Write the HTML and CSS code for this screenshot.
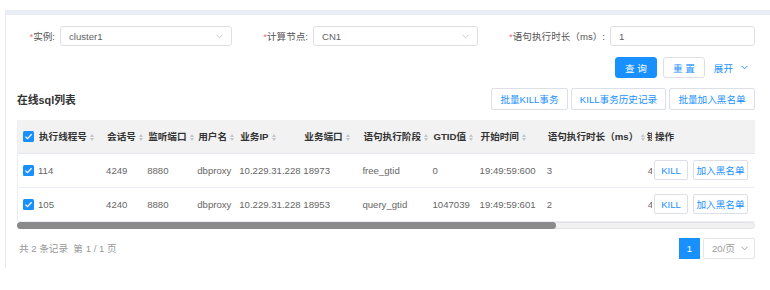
FILE: index.html
```html
<!DOCTYPE html>
<html lang="zh-CN">

<head>
    <meta charset="UTF-8">
    <title>在线sql列表</title>
    <link rel="stylesheet" href="styles.css">
</head>

<body>
    <div class="page">
        <div class="panel">
            <div class="filters">
                <label class="f-label"><i>*</i>实例:</label>
                <div class="select">
                    <span>cluster1</span>
                    <svg class="arrow" width="7" height="5" viewBox="0 0 7 5"><path d="M0.5 0.8L3.5 3.8L6.5 0.8" /></svg>
                </div>
                <label class="f-label"><i>*</i>计算节点:</label>
                <div class="select">
                    <span>CN1</span>
                    <svg class="arrow" width="7" height="5" viewBox="0 0 7 5"><path d="M0.5 0.8L3.5 3.8L6.5 0.8" /></svg>
                </div>
                <label class="f-label"><i>*</i>语句执行时长（ms）:</label>
                <div class="select"><span>1</span></div>
            </div>

            <div class="actions">
                <button class="btn btn-primary">查 询</button>
                <button class="btn">重 置</button>
                <a class="expand" href="javascript:void(0)">展开
                    <svg width="7" height="5" viewBox="0 0 7 5"><path d="M0.5 0.8L3.5 3.8L6.5 0.8" /></svg>
                </a>
            </div>

            <div class="toolbar">
                <h3>在线sql列表</h3>
                <div class="tool-btns">
                    <button class="tbtn w77">批量KILL事务</button>
                    <button class="tbtn w95">KILL事务历史记录</button>
                    <button class="tbtn w86">批量加入黑名单</button>
                </div>
            </div>

            <div class="grid">
                <div class="grid-body">
                    <div class="scroll-part">
                        <table class="tbl">
                            <colgroup>
                                <col style="width:83px"><col style="width:41px"><col style="width:50px">
                                <col style="width:42px"><col style="width:64px"><col style="width:59px">
                                <col style="width:70px"><col style="width:47px"><col style="width:67px">
                                <col style="width:100px"><col style="width:120px">
                            </colgroup>
                            <thead>
                                <tr>
                                    <th><svg class="cb" width="11" height="11" viewBox="0 0 11 11"><rect width="11" height="11" rx="1.5" /><path d="M2.4 5.6L4.5 7.6L8.6 3.3" /></svg>执行线程号<span class="sort"></span></th>
                                    <th>会话号<span class="sort"></span></th>
                                    <th>监听端口<span class="sort"></span></th>
                                    <th>用户名<span class="sort"></span></th>
                                    <th>业务IP<span class="sort"></span></th>
                                    <th>业务端口<span class="sort"></span></th>
                                    <th>语句执行阶段<span class="sort"></span></th>
                                    <th>GTID值<span class="sort"></span></th>
                                    <th>开始时间<span class="sort"></span></th>
                                    <th>语句执行时长（ms）<span class="sort"></span></th>
                                    <th class="cut">锁</th>
                                </tr>
                            </thead>
                            <tbody>
                                <tr>
                                    <td><svg class="cb" width="11" height="11" viewBox="0 0 11 11"><rect width="11" height="11" rx="1.5" /><path d="M2.4 5.6L4.5 7.6L8.6 3.3" /></svg>114</td>
                                    <td>4249</td>
                                    <td>8880</td>
                                    <td>dbproxy</td>
                                    <td>10.229.31.228</td>
                                    <td>18973</td>
                                    <td>free_gtid</td>
                                    <td>0</td>
                                    <td>19:49:59:600</td>
                                    <td>3</td>
                                    <td class="cut">4</td>
                                </tr>
                                <tr>
                                    <td><svg class="cb" width="11" height="11" viewBox="0 0 11 11"><rect width="11" height="11" rx="1.5" /><path d="M2.4 5.6L4.5 7.6L8.6 3.3" /></svg>105</td>
                                    <td>4240</td>
                                    <td>8880</td>
                                    <td>dbproxy</td>
                                    <td>10.229.31.228</td>
                                    <td>18953</td>
                                    <td>query_gtid</td>
                                    <td>1047039</td>
                                    <td>19:49:59:601</td>
                                    <td>2</td>
                                    <td class="cut">4</td>
                                </tr>
                            </tbody>
                        </table>
                    </div>
                    <div class="fixed-part">
                        <table class="tbl">
                            <thead>
                                <tr><th class="op-head">操作</th></tr>
                            </thead>
                            <tbody>
                                <tr><td class="op"><button class="mini kill">KILL</button><button class="mini black">加入黑名单</button></td></tr>
                                <tr><td class="op"><button class="mini kill">KILL</button><button class="mini black">加入黑名单</button></td></tr>
                            </tbody>
                        </table>
                    </div>
                </div>
                <div class="hscroll">
                    <div class="thumb"></div>
                </div>
            </div>

            <div class="footer">
                <span class="total">共 2 条记录 &nbsp;第 1 / 1 页</span>
                <div class="pager">
                    <span class="pg-num">1</span>
                    <div class="pg-size">
                        <span>20/页</span>
                        <svg width="7" height="5" viewBox="0 0 7 5"><path d="M0.5 0.8L3.5 3.8L6.5 0.8" /></svg>
                    </div>
                </div>
            </div>
        </div>
    </div>
</body>

</html>
```

FILE: styles.css
```css
body {
    margin: 0;
    font-family: "Liberation Sans", "Noto Sans CJK SC", sans-serif;
    font-size: 9.6px;
    color: #333;
    background: #fff;
}

.page {
    padding: 10px 0 0 5px;
}

.panel {
    border-top: 5px solid #e9edf4;
    border-left: 1px solid #e8e8e8;
    height: 258px;
    padding: 0 15px 0 11px;
    box-sizing: border-box;
}

/* filter form */
.filters {
    display: grid;
    grid-template-columns: 43px 172px 81px 165px 132px 145px;
    align-items: center;
    margin-top: 11px;
}

.f-label {
    text-align: right;
    padding-right: 5px;
    color: #555;
    white-space: nowrap;
}

.f-label i {
    font-style: normal;
    color: #f56c6c;
}

.select {
    height: 20px;
    border: 1px solid #dcdfe6;
    border-radius: 3px;
    box-sizing: border-box;
    display: flex;
    align-items: center;
    padding: 0 8px;
    color: #606266;
}

.select .arrow {
    margin-left: auto;
    fill: none;
    stroke: #c0c4cc;
    stroke-width: 0.9;
}

.actions {
    display: flex;
    justify-content: flex-end;
    align-items: center;
    margin-top: 11px;
}

.btn {
    width: 42px;
    height: 21px;
    margin-left: 6px;
    border: 1px solid #dcdfe6;
    border-radius: 3px;
    background: #fff;
    color: #1890ff;
    font: inherit;
    padding: 0;
    cursor: pointer;
}

.btn-primary {
    background: #1890ff;
    border-color: #1890ff;
    color: #fff;
}

.expand {
    display: flex;
    align-items: center;
    gap: 8px;
    margin-left: 9px;
    padding-right: 7px;
    color: #1890ff;
    text-decoration: none;
}

.expand svg {
    fill: none;
    stroke: #1890ff;
    stroke-width: 0.9;
}

/* list toolbar */
.toolbar {
    display: flex;
    align-items: center;
    justify-content: space-between;
    margin-top: 10px;
}

.toolbar h3 {
    margin: 0;
    font-size: 10.8px;
    font-weight: bold;
    color: #333;
}

.tool-btns {
    display: flex;
    gap: 3px;
}

.tbtn {
    height: 22px;
    padding: 0;
    border: 1px solid #dcdfe6;
    border-radius: 2px;
    background: #fff;
    color: #1890ff;
    font: inherit;
    white-space: nowrap;
    cursor: pointer;
}

.w77 {
    width: 77px;
}

.w95 {
    width: 95px;
}

.w86 {
    width: 86px;
}

/* table */
.grid {
    margin-top: 10px;
}

.grid-body {
    display: flex;
    border-left: 1px solid #ebeef5;
}

.scroll-part {
    width: 634px;
    overflow: hidden;
}

.fixed-part {
    width: 103px;
}

.tbl {
    border-collapse: collapse;
    table-layout: fixed;
    width: 744px;
    white-space: nowrap;
}

.fixed-part .tbl {
    width: 103px;
}

.tbl th {
    height: 33px;
    box-sizing: border-box;
    background: #f2f2f2;
    border-bottom: 1px solid #e4e7ed;
    text-align: left;
    font-weight: bold;
    color: #333;
    padding: 0 0 0 6px;
}

.tbl td {
    height: 34px;
    box-sizing: border-box;
    border-bottom: 1px solid #ebeef5;
    color: #666;
    padding: 0 0 0 5px;
}

.tbl th:first-child {
    padding-left: 5px;
}

.tbl th.cut {
    padding-left: 5px;
}

.tbl td.cut {
    padding-left: 6px;
}

.cb {
    vertical-align: -2px;
    margin-right: 5px;
}

td .cb {
    margin-right: 4px;
}

.cb rect {
    fill: #1890ff;
}

.cb path {
    fill: none;
    stroke: #fff;
    stroke-width: 1.3;
}

.sort {
    display: inline-flex;
    flex-direction: column;
    gap: 1px;
    vertical-align: middle;
    margin-left: 3px;
}

.sort::before,
.sort::after {
    content: "";
    border-left: 2px solid transparent;
    border-right: 2px solid transparent;
}

.sort::before {
    border-bottom: 3px solid #c0c4cc;
}

.sort::after {
    border-top: 3px solid #c0c4cc;
}

.tbl th.op-head {
    padding-left: 3px;
}

.tbl td.op {
    padding-left: 2px;
}

.mini {
    height: 20px;
    padding: 0;
    border: 1px solid #dcdfe6;
    border-radius: 2px;
    background: #fff;
    color: #1890ff;
    font: inherit;
    vertical-align: middle;
    cursor: pointer;
}

.mini.kill {
    width: 34px;
}

.mini.black {
    width: 55px;
    margin-left: 5px;
}

.hscroll {
    height: 7px;
    box-sizing: border-box;
    background: #f1f1f1;
    border: 1px solid #e2e2e2;
    border-radius: 4px;
}

.thumb {
    width: 539px;
    height: 7px;
    margin: -1px 0 0 -1px;
    background: #8a8a8a;
    border-radius: 4px;
}

/* footer */
.footer {
    display: flex;
    align-items: center;
    justify-content: space-between;
    margin-top: 9px;
}

.total {
    padding-left: 2px;
    color: #999;
}

.pager {
    display: flex;
    gap: 3px;
}

.pg-num {
    width: 21px;
    height: 21px;
    display: flex;
    align-items: center;
    justify-content: center;
    background: #1890ff;
    color: #fff;
}

.pg-size {
    width: 52px;
    height: 21px;
    box-sizing: border-box;
    border: 1px solid #e5e5e5;
    border-radius: 2px;
    display: flex;
    align-items: center;
    justify-content: space-between;
    padding: 0 6px 0 8px;
    color: #999;
}

.pg-size svg {
    fill: none;
    stroke: #999;
    stroke-width: 0.9;
}
```
